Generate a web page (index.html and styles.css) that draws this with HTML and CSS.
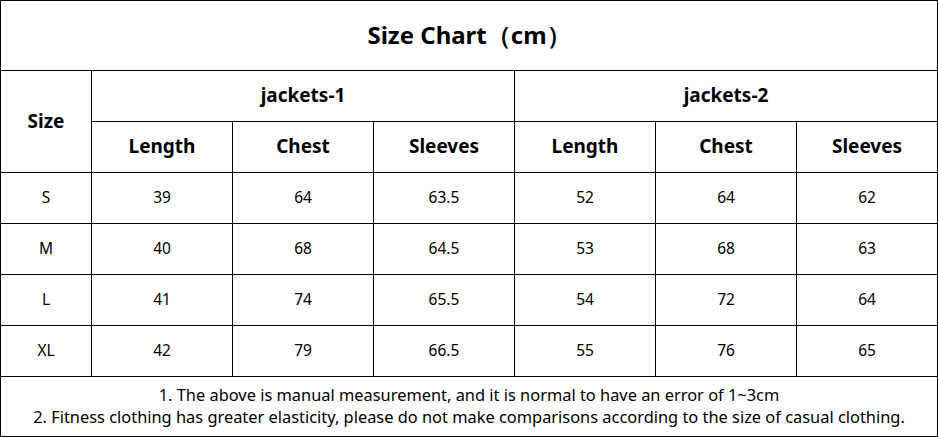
FILE: index.html
```html
<!DOCTYPE html>
<html lang="en">
<head>
<meta charset="utf-8">
<title>Size Chart</title>
<link rel="stylesheet" href="styles.css">
</head>
<body>
<div class="chart">
  <div class="cell title">Size Chart（cm）</div>
  <div class="cell head size">Size</div>
  <div class="cell head group">jackets-1</div>
  <div class="cell head group">jackets-2</div>
  <div class="cell head">Length</div>
  <div class="cell head">Chest</div>
  <div class="cell head">Sleeves</div>
  <div class="cell head">Length</div>
  <div class="cell head">Chest</div>
  <div class="cell head">Sleeves</div>

  <div class="cell">S</div><div class="cell">39</div><div class="cell">64</div><div class="cell">63.5</div><div class="cell">52</div><div class="cell">64</div><div class="cell">62</div>
  <div class="cell">M</div><div class="cell">40</div><div class="cell">68</div><div class="cell">64.5</div><div class="cell">53</div><div class="cell">68</div><div class="cell">63</div>
  <div class="cell">L</div><div class="cell">41</div><div class="cell">74</div><div class="cell">65.5</div><div class="cell">54</div><div class="cell">72</div><div class="cell">64</div>
  <div class="cell">XL</div><div class="cell">42</div><div class="cell">79</div><div class="cell">66.5</div><div class="cell">55</div><div class="cell">76</div><div class="cell">65</div>

  <div class="cell note">
    <p>1. The above is manual measurement, and it is normal to have an error of 1~3cm</p>
    <p>2. Fitness clothing has greater elasticity, please do not make comparisons according to the size of casual clothing.</p>
  </div>
</div>
</body>
</html>
```
FILE: styles.css
```css
html, body {
  margin: 0;
  padding: 0;
  background: #fff;
}
body {
  font-family: "Noto Sans", "Open Sans", sans-serif;
  color: #000;
}
.chart {
  display: grid;
  grid-template-columns: 90px repeat(6, 140px);
  grid-template-rows: 69px repeat(6, 50px) 59px;
  gap: 1px;
  padding: 1px;
  background: #000;
  width: 938px;
  height: 437px;
  box-sizing: border-box;
}
.cell {
  background: #fff;
  display: flex;
  align-items: center;
  justify-content: center;
  font-size: 15.5px;
  padding-bottom: 2px;
}
.title {
  grid-column: 1 / -1;
  font-size: 24px;
  font-weight: 700;
}
.head {
  font-size: 19px;
  font-weight: 700;
}
.size {
  grid-row: span 2;
}
.group {
  grid-column: span 3;
}
.note {
  grid-column: 1 / -1;
  flex-direction: column;
  font-size: 16.4px;
  line-height: 22px;
  padding-bottom: 1px;
}
.note p {
  margin: 0;
  white-space: nowrap;
}
```
